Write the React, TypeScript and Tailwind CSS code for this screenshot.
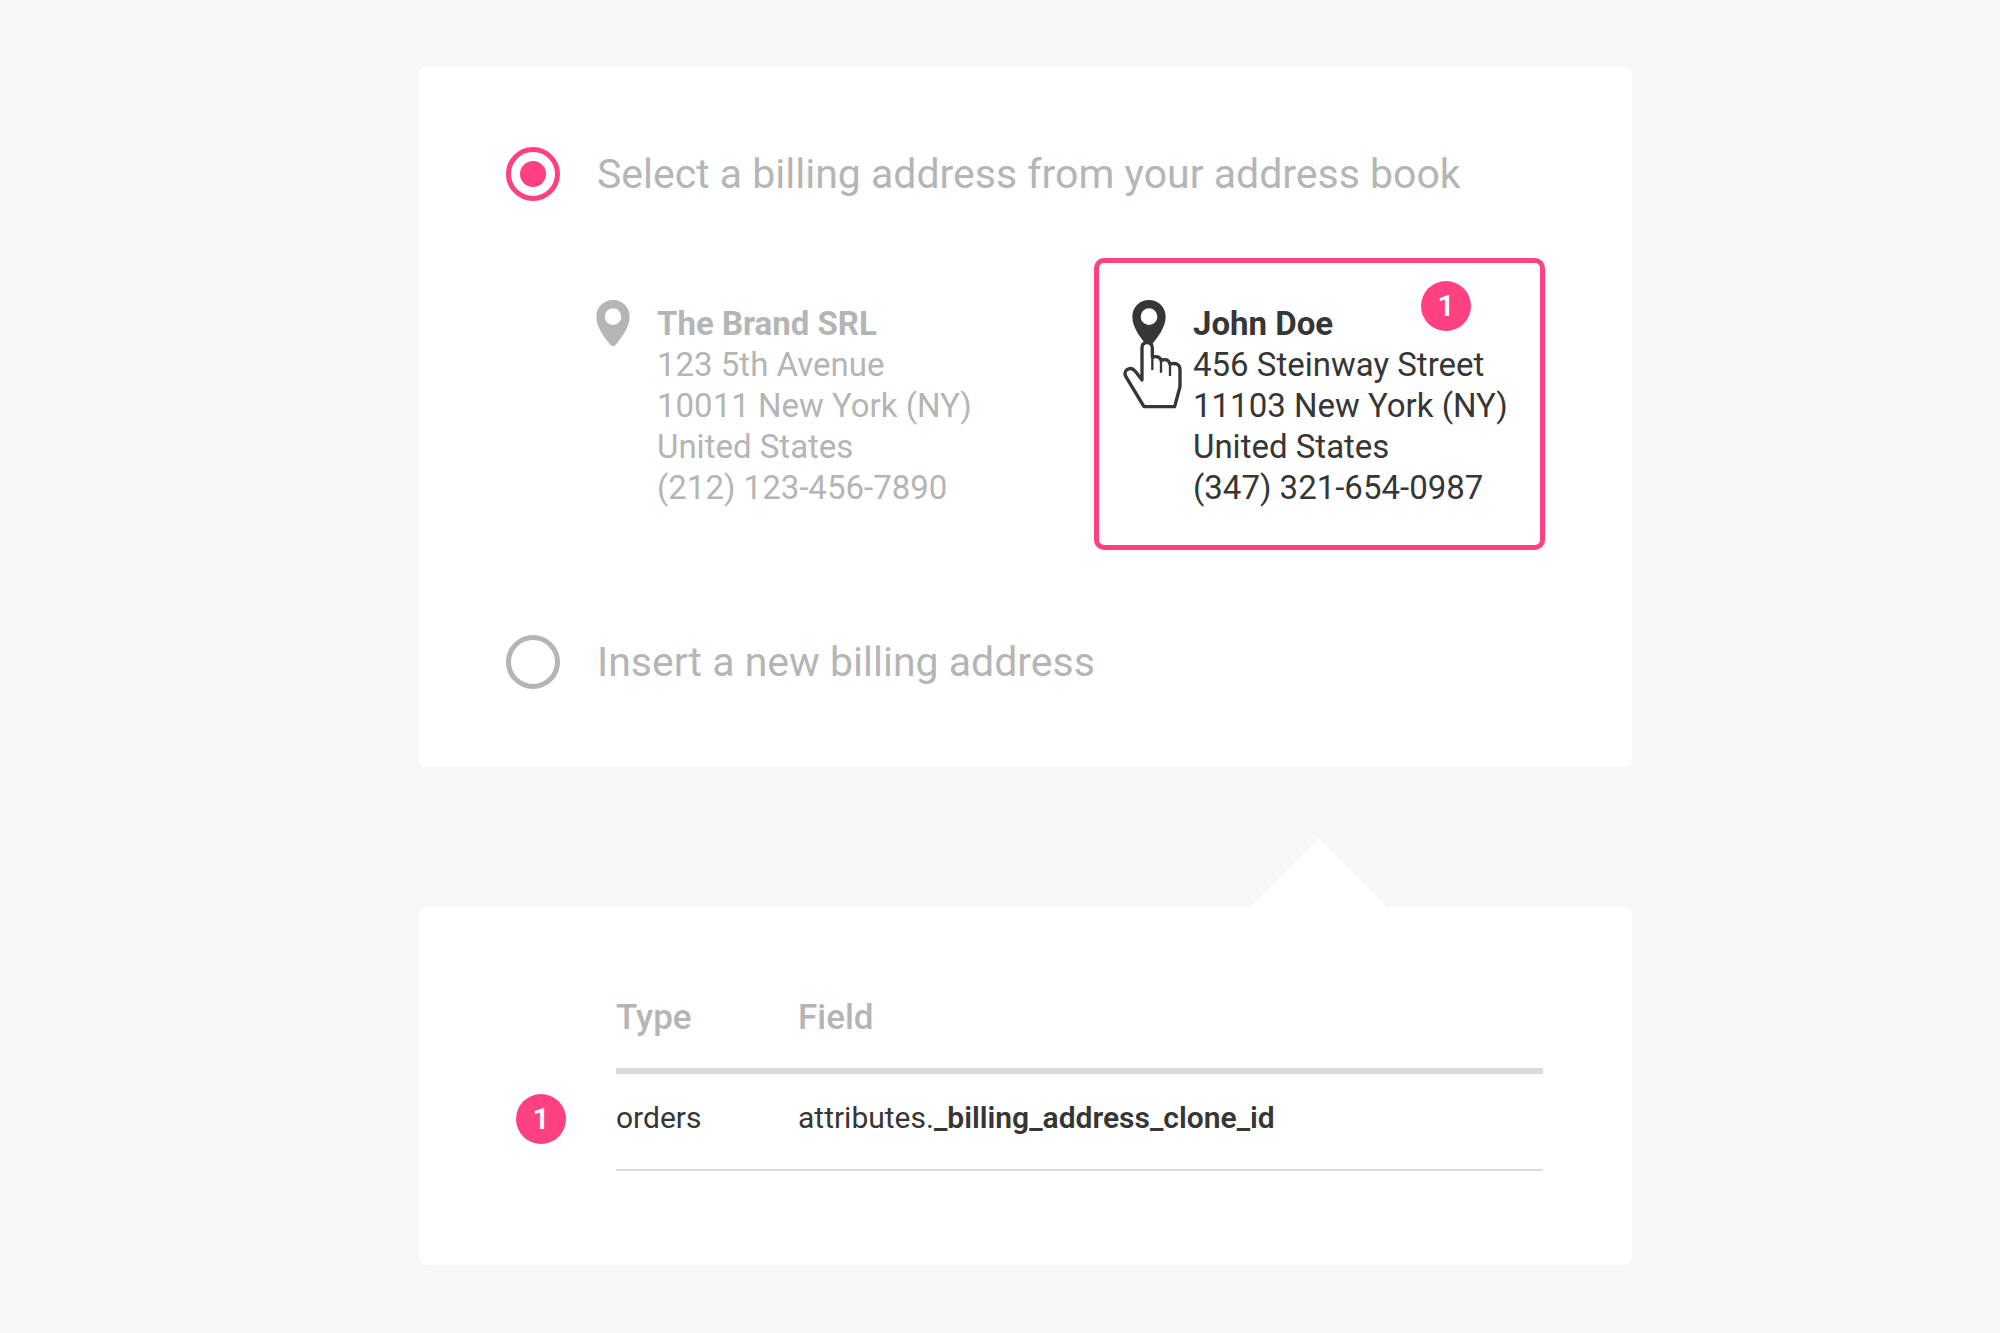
import { useState } from "react";

type Address = {
  id: string;
  name: string;
  lines: string[];
  step?: number;
};

const addresses: Address[] = [
  {
    id: "brand",
    name: "The Brand SRL",
    lines: ["123 5th Avenue", "10011 New York (NY)", "United States", "(212) 123-456-7890"],
  },
  {
    id: "john",
    name: "John Doe",
    lines: ["456 Steinway Street", "11103 New York (NY)", "United States", "(347) 321-654-0987"],
    step: 1,
  },
];

function Pin() {
  return (
    <svg viewBox="0 0 100 138" className="h-[46px] w-[34px]" fill="currentColor" aria-hidden="true">
      <path
        fillRule="evenodd"
        d="M50 0C22 0 0 22 0 50c0 32 24 62 42 84q8 8 16 0c18-22 42-52 42-84C100 22 78 0 50 0Zm0 25a25 25 0 1 1 0 50a25 25 0 0 1 0-50Z"
      />
    </svg>
  );
}

function Hand() {
  return (
    <svg
      viewBox="70 150 180 210"
      className="absolute top-10 -left-[9px] h-[70px] w-[60px]"
      fill="none"
      stroke="#363636"
      strokeWidth="10"
      strokeLinejoin="round"
      strokeLinecap="round"
      aria-hidden="true"
    >
      <path
        fill="#fff"
        d="M127 270V174Q127 158 142 158T158 174V201Q180 196 184 211Q205 203 211 222Q241 215 241 240V290L225 350H133L80 262Q71 247 82 239Q95 230 107 244Z"
      />
      <path strokeLinecap="butt" strokeWidth="7" d="M158 195V240M184 208V248M211 218V258" />
    </svg>
  );
}

function Badge({ value }: { value: number }) {
  return (
    <span className="flex size-[50px] items-center justify-center rounded-full bg-[#ff4081] text-[30px] leading-none font-semibold text-white">
      {value}
    </span>
  );
}

function Choice({
  id,
  label,
  checked,
  onSelect,
}: {
  id: string;
  label: string;
  checked: boolean;
  onSelect: () => void;
}) {
  return (
    <div className="flex items-center gap-[37px]">
      <input
        id={id}
        type="radio"
        name="billing"
        checked={checked}
        onChange={onSelect}
        className="grid size-[54px] shrink-0 appearance-none place-content-center rounded-full border-5 border-[#b5b5b5] before:size-[26px] before:rounded-full checked:border-[#ff4081] checked:before:bg-[#ff4081]"
      />
      <label htmlFor={id} className="text-[41px] leading-[56px] text-[#b5b5b5]">
        {label}
      </label>
    </div>
  );
}

export default function App() {
  const [mode, setMode] = useState("book");
  const [selected, setSelected] = useState("john");

  return (
    <main className="min-h-screen bg-[#f5f7f9] pt-[67px] pb-[68px] pl-[51px] font-['Roboto',sans-serif] text-[#363636]">
      <div className="mx-auto max-w-[1213px]">
        <section className="rounded-md bg-white pt-[79px] pr-[87px] pb-[77px] pl-[87px]">
          <Choice
            id="book"
            label="Select a billing address from your address book"
            checked={mode === "book"}
            onSelect={() => setMode("book")}
          />
          <div className="mt-14 ml-[52px] grid grid-cols-2 gap-[85px]">
            {addresses.map((address) => {
              const active = address.id === selected;
              return (
                <button
                  key={address.id}
                  type="button"
                  aria-pressed={active}
                  onClick={() => setSelected(address.id)}
                  className={
                    active
                      ? "relative flex gap-[27px] rounded-[10px] border-5 border-[#ff4081] py-[37px] pl-[33px] text-left"
                      : "relative flex gap-[27px] rounded-[10px] border-5 border-transparent py-[37px] pl-[33px] text-left text-[#b5b5b5]"
                  }
                >
                  <span className="relative shrink-0">
                    <Pin />
                    {active && <Hand />}
                  </span>
                  <span className="flex flex-col pt-[3px] text-[33px] leading-[41px] whitespace-nowrap">
                    <strong className="font-bold">{address.name}</strong>
                    {address.lines.map((line) => (
                      <span key={line}>{line}</span>
                    ))}
                  </span>
                  {address.step && (
                    <span className="absolute top-[18px] right-[69px]">
                      <Badge value={address.step} />
                    </span>
                  )}
                </button>
              );
            })}
          </div>
          <div className="mt-[84px]">
            <Choice
              id="new"
              label="Insert a new billing address"
              checked={mode === "new"}
              onSelect={() => setMode("new")}
            />
          </div>
        </section>

        <section className="relative mt-[140px] rounded-lg bg-white pt-[90px] pr-[89px] pb-[94px] pl-[97px]">
          <svg
            viewBox="0 0 138 69"
            className="absolute right-[244px] bottom-full h-[69px] w-[138px]"
            fill="#fff"
            aria-hidden="true"
          >
            <path d="M0 69L69 0L138 69Z" />
          </svg>
          <table className="w-full table-fixed border-separate border-spacing-0 text-left">
            <colgroup>
              <col className="w-[100px]" />
              <col className="w-[182px]" />
              <col />
            </colgroup>
            <thead className="text-[35px] leading-[42px] text-[#b5b5b5]">
              <tr>
                <td />
                <th scope="col" className="border-b-6 border-[#dadada] pb-[29px] font-medium">
                  Type
                </th>
                <th scope="col" className="border-b-6 border-[#dadada] pb-[29px] font-medium">
                  Field
                </th>
              </tr>
            </thead>
            <tbody className="align-top text-[30px] leading-[48px]">
              <tr>
                <td className="pt-5">
                  <Badge value={1} />
                </td>
                <td className="border-b-2 border-[#dadada] pt-5 pb-[27px]">orders</td>
                <td className="border-b-2 border-[#dadada] pt-5 pb-[27px]">
                  attributes.<strong className="font-semibold">_billing_address_clone_id</strong>
                </td>
              </tr>
            </tbody>
          </table>
        </section>
      </div>
    </main>
  );
}
